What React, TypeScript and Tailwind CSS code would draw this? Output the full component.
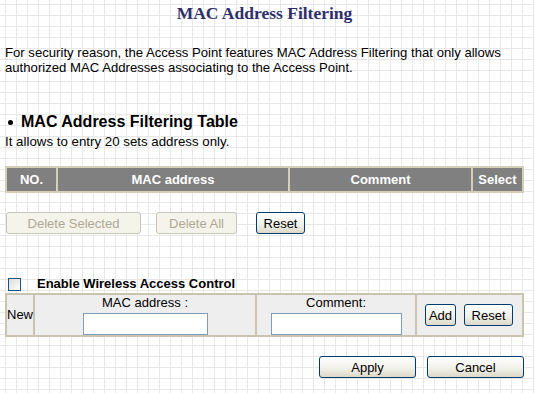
import React from "react";

const xpBtn =
  "h-[22px] rounded-[3px] border border-[#003c74] bg-[linear-gradient(to_bottom,#ffffff,#f0efe7_60%,#dcd9c8)] text-[13px] text-black leading-none";

const disabledBtn =
  "h-[22px] rounded-[3px] border border-[#c9c7ba] bg-[#f5f4ea] text-[13px] text-[#aca899] leading-none";

const App: React.FC = () => {
  return (
    <div className="min-h-screen w-[534px] bg-white bg-[linear-gradient(to_right,#e8e8e8_1px,transparent_1px),linear-gradient(to_bottom,#e8e8e8_1px,transparent_1px)] bg-[size:11px_11px] bg-[position:5px_4px] font-['Liberation_Sans',Arial,sans-serif] text-[13px] text-black">
      <div className="pl-[5px] pr-[10px] pt-[4px]">
        {/* Title */}
        <h1 className="text-center font-['Liberation_Serif','Times_New_Roman',serif] text-[17.5px] font-bold leading-[18px] text-[#2e2e6a]">
          MAC Address Filtering
        </h1>

        <p className="mt-[23px] text-[13.15px] leading-[15px]">
          For security reason, the Access Point features MAC Address Filtering that only allows
          <br />
          authorized MAC Addresses associating to the Access Point.
        </p>

        {/* Section */}
        <div className="mt-[38px] flex items-center gap-[8px] pl-[3px]">
          <span className="h-[5px] w-[5px] rounded-full bg-black" />
          <span className="text-[16px] font-bold leading-[18px]">MAC Address Filtering Table</span>
        </div>
        <p className="mt-[4px] text-[13.3px] leading-[14px]">It allows to entry 20 sets address only.</p>

        {/* List table header */}
        <table className="mt-[17px] w-[519px] border-separate border-spacing-[2px] bg-[#d4d0b8] text-[13px] font-bold text-white">
          <thead>
            <tr className="h-[23px]">
              <th className="w-[49px] bg-[#808080]">NO.</th>
              <th className="w-[230px] bg-[#808080]">MAC address</th>
              <th className="bg-[#808080]">Comment</th>
              <th className="w-[49px] bg-[#808080]">Select</th>
            </tr>
          </thead>
        </table>

        <div className="mt-[19px] flex items-center">
          <button disabled className={`${disabledBtn} ml-[1px] w-[135px]`}>
            Delete Selected
          </button>
          <button disabled className={`${disabledBtn} ml-[15px] w-[81px]`}>
            Delete All
          </button>
          <button className={`${xpBtn} ml-[19px] w-[49px]`}>Reset</button>
        </div>

        {/* Enable */}
        <div className="mt-[43px] flex h-[14px] items-center">
          <span className="ml-[3px] h-[13px] w-[13px] border border-[#1c5180] bg-[linear-gradient(135deg,#dcdcd7,#ffffff)]" />
          <span className="ml-[16px] font-bold leading-[14px]">Enable Wireless Access Control</span>
        </div>

        {/* New entry table */}
        <table className="mt-[2px] w-[519px] border-separate border-spacing-0 border-2 border-[#c8c4b0] bg-[#eeeeee]">
          <tbody>
            <tr className="h-[40px]">
              <td className="w-[26px] border-r-2 border-[#c8c4b0] text-left">New</td>
              <td className="w-[222px] border-r-2 border-[#c8c4b0] text-center">
                <div className="leading-[15px]">MAC address :</div>
                <input className="mt-[3px] h-[22px] w-[125px] border border-[#7f9db9] bg-white" />
              </td>
              <td className="w-[160px] border-r-2 border-[#c8c4b0] text-center">
                <div className="leading-[15px]">Comment:</div>
                <input className="mt-[3px] h-[22px] w-[131px] border border-[#7f9db9] bg-white" />
              </td>
              <td>
                <div className="flex items-center pl-[8px]">
                  <button className={`${xpBtn} w-[31px]`}>Add</button>
                  <button className={`${xpBtn} ml-[8px] w-[49px]`}>Reset</button>
                </div>
              </td>
            </tr>
          </tbody>
        </table>

        <div className="mt-[19px] flex justify-end gap-[11px]">
          <button className={`${xpBtn} w-[97px]`}>Apply</button>
          <button className={`${xpBtn} w-[97px]`}>Cancel</button>
        </div>
      </div>
    </div>
  );
};

export default App;
